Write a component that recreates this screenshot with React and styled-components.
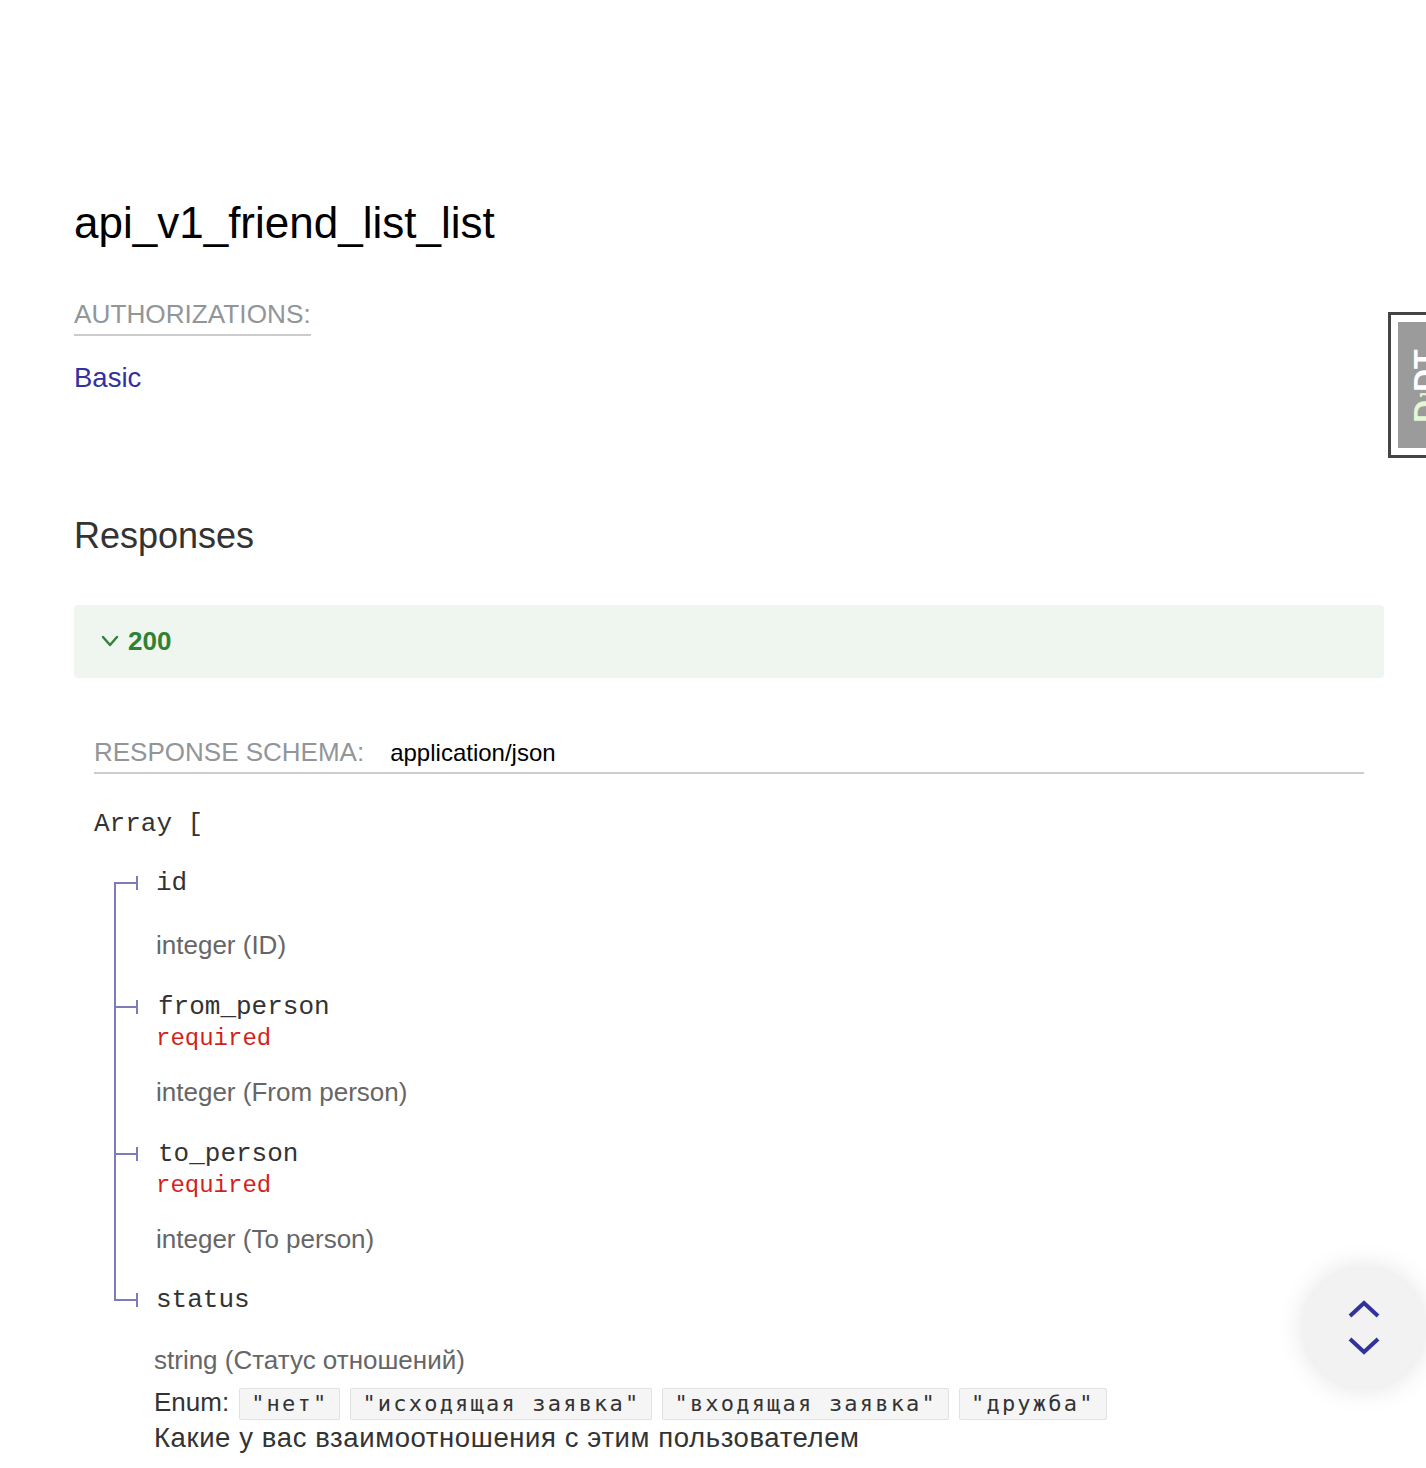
import React from "react";
import styled, { createGlobalStyle, css } from "styled-components";

const GlobalStyle = createGlobalStyle`
  html, body {
    margin: 0;
    padding: 0;
    background: #ffffff;
    overflow: hidden;
  }
  body {
    font-family: "Liberation Sans", Arial, sans-serif;
    color: #333333;
  }
  * { box-sizing: border-box; }
`;

const TREE = "#7c7cbb";
const MONO = `"Liberation Mono", "Courier New", monospace`;

const Page = styled.main`
  position: relative;
  min-height: 1468px;
  padding: 197px 42px 0 74px;
`;

const Title = styled.h1`
  margin: 0;
  font-size: 44px;
  line-height: 52px;
  font-weight: 400;
  color: #000000;
`;

const AuthLabel = styled.div`
  display: inline-block;
  margin-top: 50px;
  padding-bottom: 5px;
  border-bottom: 2px solid #cccccc;
  font-size: 26.2px;
  line-height: 30px;
  text-transform: uppercase;
  color: #929699;
`;

const AuthBlock = styled.div`
  margin-top: 26px;
`;

const AuthLink = styled.a`
  font-size: 27.5px;
  line-height: 32px;
  color: #32329f;
  text-decoration: none;
`;

const SectionHeading = styled.h3`
  margin: 121px 0 0;
  font-size: 36px;
  line-height: 42px;
  font-weight: 400;
  color: #333333;
`;

const ResponseBar = styled.button`
  display: flex;
  align-items: center;
  gap: 9px;
  width: 100%;
  height: 73px;
  margin-top: 47.5px;
  padding: 0 0 0 27px;
  border: none;
  border-radius: 4px;
  background: rgba(29, 129, 39, 0.07);
  color: #2f8232;
  font-family: "Liberation Sans", Arial, sans-serif;
  font-size: 26px;
  font-weight: 700;
  cursor: pointer;
`;

const Schema = styled.section`
  margin: 59px 20px 0;
`;

const SchemaHeader = styled.div`
  display: flex;
  align-items: baseline;
  gap: 26px;
  padding-bottom: 4px;
  border-bottom: 2px solid #c9cdd1;
`;

const SchemaLabel = styled.span`
  font-size: 26px;
  line-height: 30px;
  text-transform: uppercase;
  color: #929699;
`;

const SchemaValue = styled.span`
  font-size: 24px;
  line-height: 30px;
  color: #000000;
`;

const ArrayLabel = styled.div`
  margin-top: 34px;
  font-family: ${MONO};
  font-size: 26px;
  line-height: 32px;
  color: #333333;
`;

const PropertyList = styled.div`
  margin: 27px 0 0 20px;
`;

const PropertyRow = styled.div`
  position: relative;
  padding-left: ${(p) => (p.$last ? 40 : 42)}px;
  padding-bottom: ${(p) => p.$gapAfter || 0}px;

  &::before {
    content: "";
    position: absolute;
    left: 2px;
    top: 9px;
    width: 20px;
    height: 14px;
    border-right: 2px solid ${TREE};
    background: linear-gradient(
      to bottom,
      transparent 6px,
      ${TREE} 6px,
      ${TREE} 8px,
      transparent 8px
    );
  }

  &::after {
    content: "";
    position: absolute;
    left: 0;
    width: 2px;
    background: ${TREE};
    ${(p) =>
      p.$first
        ? css`
            top: 15px;
            bottom: 0;
          `
        : p.$last
        ? css`
            top: 0;
            height: 17px;
          `
        : css`
            top: 0;
            bottom: 0;
          `}
  }
`;

const PropName = styled.div`
  padding-left: ${(p) => p.$shift || 0}px;
  font-family: ${MONO};
  font-size: 26px;
  line-height: 32px;
  color: #333333;
`;

const Required = styled.div`
  font-family: ${MONO};
  font-size: 24px;
  line-height: 32px;
  color: #d41f1c;
`;

const TypeLine = styled.div`
  margin-top: ${(p) => p.$gap}px;
  font-size: 26px;
  line-height: 32px;
  color: #666666;
`;

const EnumRow = styled.div`
  display: flex;
  flex-wrap: wrap;
  align-items: center;
  gap: 9.5px;
  margin-top: 12.5px;
  font-size: 26px;
  color: #333333;
`;

const EnumLabel = styled.span`
  line-height: 32px;
  margin-top: -5px;
`;

const EnumChip = styled.span`
  display: inline-block;
  height: 32px;
  padding: 0 11px 0 11.5px;
  border: 1px solid rgba(51, 51, 51, 0.1);
  border-radius: 2px;
  background: rgba(51, 51, 51, 0.05);
  font-family: "DejaVu Sans Mono", monospace;
  font-size: 22px;
  line-height: 30px;
  letter-spacing: 2.2px;
  color: #333333;
`;

const Description = styled.p`
  margin: 2px 0 0;
  font-size: 27.5px;
  line-height: 32px;
  letter-spacing: 0.6px;
  color: #333333;
`;

const ToolbarHandle = styled.div`
  position: absolute;
  top: 312px;
  right: -4px;
  width: 42px;
  height: 146px;
  padding: 7px 0 7px 7px;
  border: 3px solid #454545;
  background: #ffffff;
`;

const HandleInner = styled.div`
  height: 100%;
  background: #9b9b9b;
  padding-left: 11px;
  overflow: hidden;
`;

const HandleText = styled.span`
  display: block;
  height: 100%;
  padding-top: 25px;
  writing-mode: vertical-rl;
  transform: rotate(180deg);
  font-family: "Liberation Sans", Arial, sans-serif;
  font-weight: 700;
  font-size: 32px;
  line-height: 32px;
  color: #ffffff;
  white-space: nowrap;
`;

const HandleLetter = styled.span`
  color: #e6f7d4;
  font-size: ${(p) => p.$size}px;
`;

const ScrollButton = styled.button`
  position: fixed;
  right: 2px;
  bottom: 80px;
  width: 120px;
  height: 120px;
  display: flex;
  align-items: center;
  justify-content: center;
  border: none;
  border-radius: 50%;
  background: #f2f2f2;
  box-shadow: 0 0 28px rgba(0, 0, 0, 0.13);
  cursor: pointer;
`;

const properties = [
  { name: "id", type: "integer (ID)", gap: 30, after: 30, shift: 0 },
  { name: "from_person", required: true, type: "integer (From person)", gap: 21, after: 30, shift: 2 },
  { name: "to_person", required: true, type: "integer (To person)", gap: 21, after: 29, shift: 2 },
];

const enumValues = ["нет", "исходящая заявка", "входящая заявка", "дружба"];

export default function App() {
  return (
    <>
      <GlobalStyle />
      <Page>
        <Title>api_v1_friend_list_list</Title>
        <AuthLabel>Authorizations:</AuthLabel>
        <AuthBlock>
          <AuthLink href="#basic">Basic</AuthLink>
        </AuthBlock>

        <SectionHeading>Responses</SectionHeading>
        <ResponseBar>
          <svg width="18" height="12" viewBox="0 0 18 12" aria-hidden="true">
            <polyline
              points="2,2 9,10 16,2"
              fill="none"
              stroke="#2f8232"
              strokeWidth="2.4"
              strokeLinecap="round"
              strokeLinejoin="round"
            />
          </svg>
          <span>200</span>
        </ResponseBar>

        <Schema>
          <SchemaHeader>
            <SchemaLabel>Response Schema:</SchemaLabel>
            <SchemaValue>application/json</SchemaValue>
          </SchemaHeader>
          <ArrayLabel>Array [</ArrayLabel>
          <PropertyList>
            {properties.map((p, i) => (
              <PropertyRow key={p.name} $first={i === 0} $gapAfter={p.after}>
                <PropName $shift={p.shift}>{p.name}</PropName>
                {p.required && <Required>required</Required>}
                <TypeLine $gap={p.gap}>{p.type}</TypeLine>
              </PropertyRow>
            ))}
            <PropertyRow $last>
              <PropName $shift={2}>status</PropName>
              <TypeLine $gap={28}>string (Статус отношений)</TypeLine>
              <EnumRow>
                <EnumLabel>Enum:</EnumLabel>
                {enumValues.map((v) => (
                  <EnumChip key={v}>"{v}"</EnumChip>
                ))}
              </EnumRow>
              <Description>Какие у вас взаимоотношения с этим пользователем</Description>
            </PropertyRow>
          </PropertyList>
        </Schema>
      </Page>

      <ToolbarHandle>
        <HandleInner>
          <HandleText>
            <HandleLetter $size={32}>D</HandleLetter>
            <HandleLetter $size={14}>J</HandleLetter>
            DT
          </HandleText>
        </HandleInner>
      </ToolbarHandle>

      <ScrollButton aria-label="Scroll">
        <svg width="40" height="60" viewBox="0 0 40 60" aria-hidden="true">
          <polyline points="6,18 20,5 34,18" fill="none" stroke="#32329f" strokeWidth="4" />
          <polyline points="6,41 20,54 34,41" fill="none" stroke="#32329f" strokeWidth="4" />
        </svg>
      </ScrollButton>
    </>
  );
}
